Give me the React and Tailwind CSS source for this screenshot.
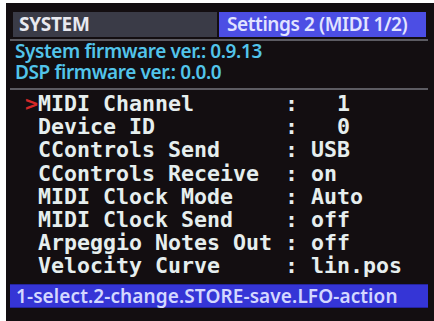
import React from 'react';

const rows = [
  ['MIDI Channel', '  1'],
  ['Device ID', '  0'],
  ['CControls Send', 'USB'],
  ['CControls Receive', 'on'],
  ['MIDI Clock Mode', 'Auto'],
  ['MIDI Clock Send', 'off'],
  ['Arpeggio Notes Out', 'off'],
  ['Velocity Curve', 'lin.pos'],
];

const sans = { fontFamily: '"Noto Sans", "Open Sans", sans-serif' };
const mono = { fontFamily: '"DejaVu Sans Mono", "Liberation Mono", monospace' };

const MenuRow = ({ label, value, active }) => (
  <div className="h-[23.2px] leading-[23.2px] text-[21.6px] font-bold whitespace-pre text-[#e6eeee] flex" style={mono}>
    <span className={active ? 'text-[#d42828]' : ''}>{active ? '>' : ' '}</span>
    <span>{label.padEnd(19, ' ')}</span>
    <span>: </span>
    <span>{value}</span>
  </div>
);

export default function App() {
  return (
    <div className="w-[434px] h-[321px] bg-white pl-[6px] pt-[3px] overflow-hidden">
      <div className="w-full h-full bg-[#130e11] flex flex-col">
        {/* title bar */}
        <div className="flex mt-[9px] ml-[7px] h-[25px] gap-[2px]" style={sans}>
          <div className="w-[204px] bg-[#3a3b47] text-[#e8e9f0] text-[19px] font-bold leading-[25px] pl-[6px] tracking-[-0.3px]">
            SYSTEM
          </div>
          <div className="w-[207px] bg-[#4c4ee4] text-[#e2e4ff] text-[19px] font-semibold leading-[25px] pl-[8px] tracking-[-0.4px]">
            Settings 2 (MIDI 1/2)
          </div>
        </div>
        <div className="mt-[2px] ml-[4px] w-[418px] h-[2px] bg-[#5c5b62]" />

        {/* firmware info */}
        <div className="pl-[9px] text-[#52c4ea] text-[19px] font-semibold leading-[21px] tracking-[-0.4px]" style={sans}>
          <div className="h-[21px]">System firmware ver.: 0.9.13</div>
          <div className="h-[21px]">DSP firmware ver.: 0.0.0</div>
        </div>
        <div className="mt-[5px] ml-[4px] w-[418px] h-[2px] bg-[#5c5b62]" />

        {/* menu */}
        <div className="mt-[2px] pl-[19px]">
          {rows.map(([label, value], i) => (
            <MenuRow key={label} label={label} value={value} active={i === 0} />
          ))}
        </div>

        {/* help bar */}
        <div
          className="mt-[6px] ml-[4px] w-[418px] h-[24px] bg-[#3535d6] border-y border-[#2424a0] text-[#d4d8ff] text-[19px] font-semibold leading-[22px] pl-[6px] tracking-[0.1px]"
          style={sans}
        >
          1-select.2-change.STORE-save.LFO-action
        </div>
      </div>
    </div>
  );
}
